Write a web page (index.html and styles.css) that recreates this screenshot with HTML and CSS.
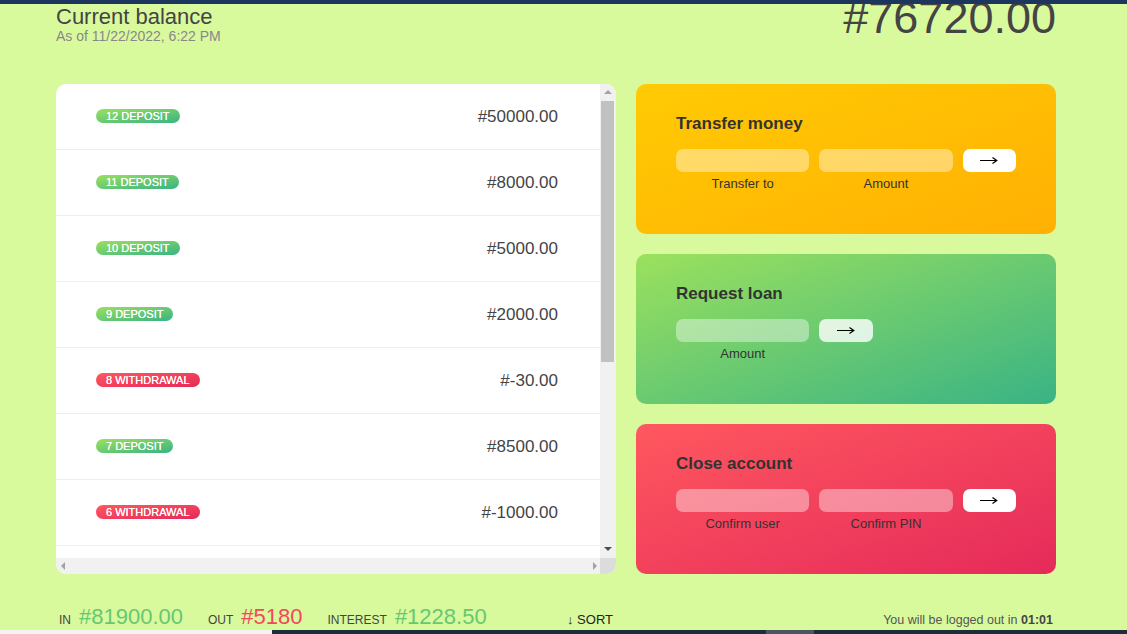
FILE: index.html
```html
<!DOCTYPE html>
<html lang="en">
<head>
<meta charset="utf-8">
<title>Bankist</title>
<link rel="stylesheet" href="styles.css">
</head>
<body>
<div class="topbar"></div>
<main class="app">
  <div class="balance">
    <div>
      <p class="balance__label">Current balance</p>
      <p class="balance__date">As of <span>11/22/2022, 6:22 PM</span></p>
    </div>
    <p class="balance__value">#76720.00</p>
  </div>

  <section class="movements">
    <div class="movements__list">
      <div class="movements__row"><span class="movements__type deposit">12 deposit</span><span class="movements__value">#50000.00</span></div>
      <div class="movements__row"><span class="movements__type deposit">11 deposit</span><span class="movements__value">#8000.00</span></div>
      <div class="movements__row"><span class="movements__type deposit">10 deposit</span><span class="movements__value">#5000.00</span></div>
      <div class="movements__row"><span class="movements__type deposit">9 deposit</span><span class="movements__value">#2000.00</span></div>
      <div class="movements__row"><span class="movements__type withdrawal">8 withdrawal</span><span class="movements__value">#-30.00</span></div>
      <div class="movements__row"><span class="movements__type deposit">7 deposit</span><span class="movements__value">#8500.00</span></div>
      <div class="movements__row"><span class="movements__type withdrawal">6 withdrawal</span><span class="movements__value">#-1000.00</span></div>
    </div>
    <div class="vscroll">
      <div class="sb-btn"><span class="tri tri--up"></span></div>
      <div class="vscroll__thumb"></div>
      <div class="vscroll__rest"></div>
      <div class="sb-btn"><span class="tri tri--down"></span></div>
    </div>
    <div class="hscroll">
      <div class="sb-btn sb-btn--h"><span class="tri tri--left"></span></div>
      <div class="sb-btn sb-btn--h"><span class="tri tri--right"></span></div>
    </div>
    <div class="scroll-corner"></div>
  </section>

  <div class="operation operation--transfer">
    <h2>Transfer money</h2>
    <form class="form form--transfer">
      <input type="text" class="form__input">
      <input type="number" class="form__input">
      <button type="button" class="form__btn" aria-label="Transfer"><svg class="arrow" viewBox="0 0 18 9" width="18" height="9"><path d="M0 4.5H16.5M12.5 1.5L16.8 4.5L12.5 7.5" fill="none" stroke="#000" stroke-width="1.2"/></svg></button>
      <label class="form__label">Transfer to</label>
      <label class="form__label">Amount</label>
    </form>
  </div>

  <div class="operation operation--loan">
    <h2>Request loan</h2>
    <form class="form form--loan">
      <input type="number" class="form__input">
      <button type="button" class="form__btn form__btn--loan" aria-label="Request loan"><svg class="arrow" viewBox="0 0 18 9" width="18" height="9"><path d="M0 4.5H16.5M12.5 1.5L16.8 4.5L12.5 7.5" fill="none" stroke="#000" stroke-width="1.2"/></svg></button>
      <label class="form__label form__label--first">Amount</label>
    </form>
  </div>

  <div class="operation operation--close">
    <h2>Close account</h2>
    <form class="form form--close">
      <input type="text" class="form__input">
      <input type="password" class="form__input">
      <button type="button" class="form__btn" aria-label="Close account"><svg class="arrow" viewBox="0 0 18 9" width="18" height="9"><path d="M0 4.5H16.5M12.5 1.5L16.8 4.5L12.5 7.5" fill="none" stroke="#000" stroke-width="1.2"/></svg></button>
      <label class="form__label">Confirm user</label>
      <label class="form__label">Confirm PIN</label>
    </form>
  </div>

  <div class="summary">
    <p class="summary__label">In</p>
    <p class="summary__value summary__value--in">#81900.00</p>
    <p class="summary__label">Out</p>
    <p class="summary__value summary__value--out">#5180</p>
    <p class="summary__label">Interest</p>
    <p class="summary__value summary__value--interest">#1228.50</p>
    <button type="button" class="btn--sort">&darr; SORT</button>
  </div>

  <p class="logout-timer">You will be logged out in <span class="timer">01:01</span></p>
</main>
<div class="bottombar">
  <span class="bottombar__light"></span>
  <span class="bottombar__dark"></span>
  <span class="bottombar__thumb"></span>
  <span class="bottombar__dark bottombar__fill"></span>
</div>
</body>
</html>
```

FILE: styles.css
```css
* {
  box-sizing: border-box;
  margin: 0;
  padding: 0;
}

html, body {
  height: 100%;
  overflow: hidden;
}

body {
  font-family: "Liberation Sans", Arial, sans-serif;
  color: #444;
  background-color: #d9f99d;
}

.topbar {
  position: fixed;
  top: 0;
  left: 0;
  right: 0;
  height: 4px;
  background: #1c365e;
  z-index: 5;
}

.app {
  width: 1000px;
  margin: -8px 0 0 56px;
  display: grid;
  grid-template-columns: 4fr 3fr;
  grid-template-rows: auto repeat(3, 150px) auto;
  gap: 20px;
}

/* BALANCE */
.balance {
  grid-column: 1 / span 2;
  display: flex;
  align-items: flex-end;
  justify-content: space-between;
  margin-bottom: 20px;
}

.balance__label {
  font-size: 22px;
  font-weight: 400;
  color: #444;
  margin-bottom: -2px;
}

.balance__date {
  font-size: 14px;
  color: #888;
}

.balance__value {
  font-size: 45px;
  font-weight: 400;
  color: #444;
}

/* MOVEMENTS */
.movements {
  grid-row: 2 / span 3;
  background-color: #fff;
  border-radius: 10px;
  overflow: hidden;
  display: grid;
  grid-template-columns: 1fr 16px;
  grid-template-rows: 1fr 16px;
}

.movements__list {
  overflow: hidden;
}

.movements__row {
  padding: 22px 42px 22px 40px;
  display: flex;
  align-items: center;
  border-bottom: 1px solid #eee;
  height: 66px;
}

.movements__type {
  font-size: 11px;
  text-transform: uppercase;
  font-weight: 400;
  color: #fff;
  padding: 1px 10px;
  line-height: 12px;
  border-radius: 100px;
  margin-right: 20px;
  margin-top: -1px;
  text-shadow: 0 0 0.4px #fff;
}

.deposit {
  background-image: linear-gradient(to top left, #39b385, #9be15d);
}

.withdrawal {
  background-image: linear-gradient(to top left, #e52a5a, #ff585f);
}

.movements__value {
  font-size: 17px;
  margin-left: auto;
  color: #444;
}

/* fake classic scrollbars */
.vscroll {
  background: #f1f1f1;
  display: flex;
  flex-direction: column;
}

.sb-btn {
  height: 16px;
  flex: 0 0 16px;
  display: flex;
  align-items: center;
  justify-content: center;
}

.sb-btn--h {
  width: 16px;
  height: 16px;
}

.vscroll__thumb {
  height: 261px;
  margin: 1px 2px 0 1px;
  background: #c1c1c1;
}

.vscroll__rest {
  flex: 1;
}

.hscroll {
  background: #f1f1f1;
  display: flex;
  justify-content: space-between;
}

.scroll-corner {
  background: #dcdcdc;
}

.tri {
  width: 0;
  height: 0;
  display: block;
}

.tri--up {
  border-left: 4px solid transparent;
  border-right: 4px solid transparent;
  border-bottom: 4px solid #a3a3a3;
  margin-top: -1px;
}

.tri--down {
  border-left: 4px solid transparent;
  border-right: 4px solid transparent;
  border-top: 4px solid #505050;
  margin-top: -2px;
}

.tri--left {
  border-top: 4px solid transparent;
  border-bottom: 4px solid transparent;
  border-right: 4px solid #a3a3a3;
  margin-left: -2px;
}

.tri--right {
  border-top: 4px solid transparent;
  border-bottom: 4px solid transparent;
  border-left: 4px solid #a3a3a3;
  margin-right: -6px;
}

/* OPERATIONS */
.operation {
  border-radius: 10px;
  padding: 30px 40px;
  color: #333;
}

.operation h2 {
  font-size: 17px;
  font-weight: 700;
  line-height: 20px;
  margin-bottom: 15px;
  color: #333;
}

.operation--transfer {
  background-image: linear-gradient(to top left, #ffb003, #ffcb03);
}

.operation--loan {
  background-image: linear-gradient(to top left, #39b385, #9be15d);
}

.operation--close {
  background-image: linear-gradient(to top left, #e52a5a, #ff585f);
}

.form {
  display: grid;
  grid-template-columns: 2.5fr 2.5fr 1fr;
  grid-template-rows: auto auto;
  gap: 4px 10px;
}

.form--loan {
  grid-template-columns: 2.5fr 1fr 2.5fr;
}

.form__input {
  width: 100%;
  border: none;
  background-color: rgba(255, 255, 255, 0.4);
  font-family: inherit;
  font-size: 15px;
  text-align: center;
  color: #333;
  padding: 3px 10px;
  border-radius: 7px;
  height: 23px;
  outline: none;
}

.form__label {
  font-size: 13px;
  text-align: center;
  color: #333;
}

.form__label--first {
  grid-column: 1 / 2;
  grid-row: 2 / 3;
}

.form__btn {
  border: none;
  border-radius: 7px;
  padding: 0;
  background-color: #fff;
  cursor: pointer;
  display: flex;
  align-items: center;
  justify-content: center;
}

.arrow {
  display: block;
}

.form__btn--loan {
  background-color: rgba(255, 255, 255, 0.8);
}

/* SUMMARY */
.summary {
  grid-row: 5 / 6;
  display: flex;
  align-items: baseline;
  padding: 0 3px;
  margin-top: 10px;
}

.summary__label {
  font-size: 12px;
  font-weight: 400;
  text-transform: uppercase;
  margin-right: 8px;
  color: #444;
}

.summary__value {
  font-size: 22px;
  margin-right: 25px;
}

.summary__value--in,
.summary__value--interest {
  color: #66c873;
}

.summary__value--out {
  color: #f5465d;
}

.btn--sort {
  margin-left: auto;
  border: none;
  background: none;
  font-family: inherit;
  font-size: 13px;
  font-weight: 400;
  color: #222;
  cursor: pointer;
}

.logout-timer {
  grid-row: 5 / 6;
  grid-column: 2 / 3;
  padding: 0 3px;
  margin-top: 19px;
  text-align: right;
  font-size: 12.5px;
  color: #555;
}

.timer {
  font-weight: 700;
  color: #444;
}

/* bottom strip (window chrome below the page) */
.bottombar {
  position: fixed;
  left: 0;
  right: 0;
  bottom: 0;
  height: 4px;
  display: flex;
  z-index: 5;
}

.bottombar__light {
  width: 272px;
  background: #f2f2f2;
}

.bottombar__dark {
  width: 494px;
  background: #1e2d3a;
}

.bottombar__thumb {
  width: 48px;
  background: #4b5663;
}

.bottombar__fill {
  flex: 1;
}
```
